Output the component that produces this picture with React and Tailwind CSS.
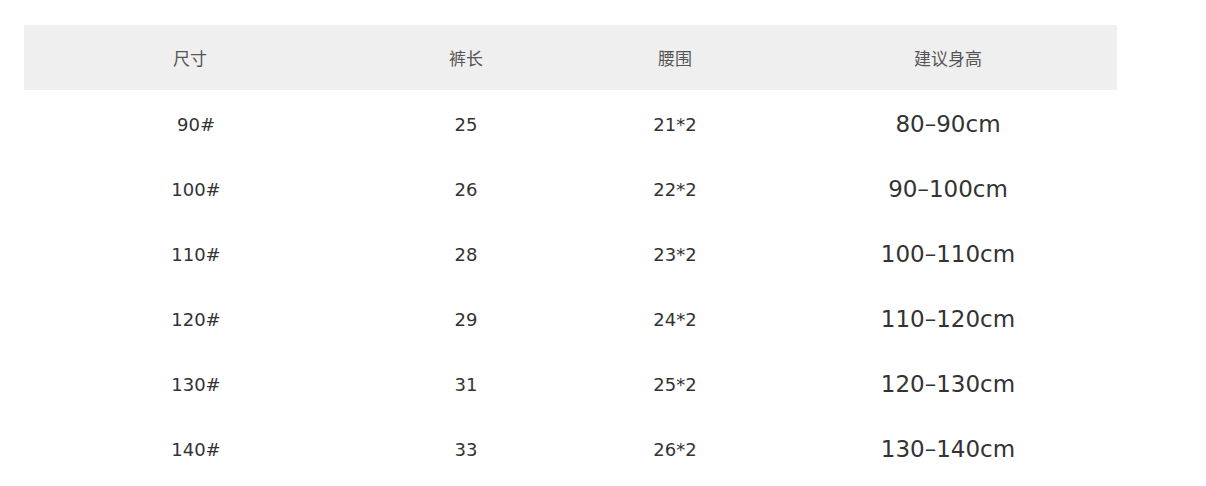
import React from "react";

const rows = [
  ["90#", "25", "21*2", "80–90cm"],
  ["100#", "26", "22*2", "90–100cm"],
  ["110#", "28", "23*2", "100–110cm"],
  ["120#", "29", "24*2", "110–120cm"],
  ["130#", "31", "25*2", "120–130cm"],
  ["140#", "33", "26*2", "130–140cm"],
];

const cols = "grid grid-cols-[344px_196px_222px_324px]";

export default function App() {
  return (
    <div className="w-[1206px] h-[486px] bg-white pt-[25px] pl-[24px] overflow-hidden">
      <div className="w-[1093px]">
        {/* header */}
        <div
          className={`${cols} h-[65px] items-center bg-[#efefef] text-[17px] text-[#555]`}
          style={{ fontFamily: '"Noto Sans CJK SC", sans-serif' }}
        >
          <div className="text-center pr-[12px]">尺寸</div>
          <div className="text-center">裤长</div>
          <div className="text-center">腰围</div>
          <div className="text-center">建议身高</div>
        </div>

        {/* rows */}
        <div className="pt-[2px] text-[#333]" style={{ fontFamily: '"DejaVu Sans", sans-serif' }}>
          {rows.map((r) => (
            <div key={r[0]} className={`${cols} h-[65px] items-center text-[18px]`}>
              <div className="text-center">{r[0]}</div>
              <div className="text-center">{r[1]}</div>
              <div className="text-center">{r[2]}</div>
              <div className="text-center text-[23px]">{r[3]}</div>
            </div>
          ))}
        </div>
      </div>
    </div>
  );
}
